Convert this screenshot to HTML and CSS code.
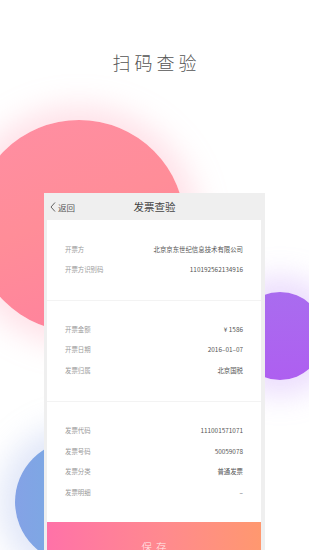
FILE: index.html
```html
<!DOCTYPE html>
<html lang="zh-CN">
<head>
<meta charset="utf-8">
<title>扫码查验</title>
<link rel="stylesheet" href="styles.css">
</head>
<body>
<div class="screen">
  <div class="blob blob-pink"></div>
  <div class="blob blob-purple"></div>
  <div class="blob blob-blue"></div>

  <h1 class="headline">扫码查验</h1>

  <div class="card">
    <div class="card-header">
      <div class="back">
        <svg class="back-icon" width="6" height="10" viewBox="0 0 6 10"><path d="M5 0.5 L1 5 L5 9.5" fill="none" stroke="#555" stroke-width="0.9"/></svg>
        <span>返回</span>
      </div>
      <div class="card-title">发票查验</div>
    </div>
    <div class="panel">
      <div class="group g1">
        <div class="row"><span class="label">开票方</span><span class="value">北京京东世纪信息技术有限公司</span></div>
        <div class="row"><span class="label">开票方识别码</span><span class="value">110192562134916</span></div>
      </div>
      <div class="group g2">
        <div class="row"><span class="label">开票金额</span><span class="value">¥ 1586</span></div>
        <div class="row"><span class="label">开票日期</span><span class="value">2016–01–07</span></div>
        <div class="row"><span class="label">发票归属</span><span class="value">北京国税</span></div>
      </div>
      <div class="group g3">
        <div class="row"><span class="label">发票代码</span><span class="value">111001571071</span></div>
        <div class="row"><span class="label">发票号码</span><span class="value">50059078</span></div>
        <div class="row"><span class="label">发票分类</span><span class="value">普通发票</span></div>
        <div class="row"><span class="label">发票明细</span><span class="value">–</span></div>
      </div>
      <div class="save">保存</div>
    </div>
  </div>
</div>
</body>
</html>
```

FILE: styles.css
```css
* { box-sizing: border-box; }
html, body {
  margin: 0;
  padding: 0;
  background: #ffffff;
}
body {
  font-family: "Noto Sans CJK SC", "Noto Sans", sans-serif;
}
.screen {
  position: relative;
  width: 309px;
  height: 550px;
  overflow: hidden;
  background: #ffffff;
}
.blob {
  position: absolute;
  border-radius: 50%;
  z-index: 0;
}
.blob-pink {
  left: -27px;
  top: 120px;
  width: 212px;
  height: 212px;
  background: linear-gradient(160deg, #ff8ea3 0%, #ff8d98 45%, #ff7f9e 100%);
  box-shadow: 0 0 30px 14px rgba(255, 170, 190, 0.35);
}
.blob-purple {
  left: 236px;
  top: 292px;
  width: 88px;
  height: 88px;
  background: linear-gradient(180deg, #a96cef 0%, #ae5ff0 100%);
  box-shadow: 0 0 28px 16px rgba(200, 160, 250, 0.35);
}
.blob-blue {
  left: 15px;
  top: 440px;
  width: 124px;
  height: 124px;
  background: linear-gradient(90deg, #84a2e6 0%, #6ab6dd 100%);
  box-shadow: 0 0 30px 16px rgba(170, 185, 235, 0.35);
}
.headline {
  position: relative;
  z-index: 1;
  margin: 0;
  padding-top: 50px;
  height: 74px;
  line-height: 24px;
  font-size: 18px;
  font-weight: 300;
  color: #555555;
  text-align: center;
  letter-spacing: 4px;
  text-indent: 4px;
}
.card {
  position: relative;
  z-index: 1;
  margin: 119px 0 0 44px;
  width: 221px;
  background: #efefef;
  padding: 0 4px 0 3px;
}
.card-header {
  position: relative;
  height: 27px;
  display: flex;
  align-items: center;
  justify-content: center;
}
.back {
  position: absolute;
  left: 3px;
  top: 0;
  height: 27px;
  display: flex;
  align-items: center;
  gap: 2px;
  font-size: 8.5px;
  color: #555;
}
.back-icon { display: block; }
.card-title {
  font-size: 10.5px;
  color: #444;
  margin-left: 1px;
}
.panel {
  background: #ffffff;
}
.group {
  padding: 19px 18px 20px;
  border-bottom: 1px solid #f3f3f3;
}
.g2 { padding-top: 18px; }
.g3 { padding-bottom: 19.5px; border-bottom: none; }
.row {
  height: 20.5px;
  display: flex;
  align-items: center;
  justify-content: space-between;
  font-size: 6.4px;
}
.label { color: #9a9a9a; }
.value { color: #555555; }
.save {
  height: 48px;
  background: linear-gradient(90deg, #ff72a8 0%, #ff8a8e 55%, #ff986f 100%);
  color: rgba(255, 255, 255, 0.85);
  font-size: 10.5px;
  font-weight: 300;
  letter-spacing: 4px;
  text-indent: 4px;
  display: flex;
  align-items: center;
  justify-content: center;
}
```
